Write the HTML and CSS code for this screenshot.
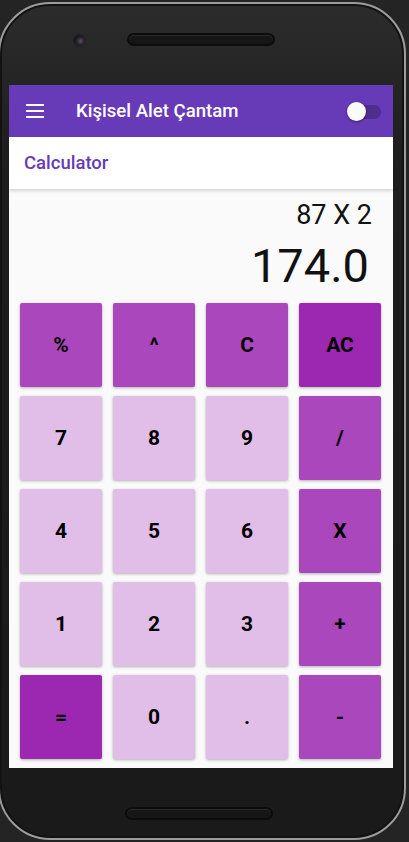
FILE: index.html
```html
<!DOCTYPE html>
<html lang="tr">
<head>
<meta charset="utf-8">
<title>Kişisel Alet Çantam</title>
<link rel="stylesheet" href="styles.css">
</head>
<body>
<div class="phone">
  <div class="bezel-top">
    <span class="camera"></span>
    <span class="speaker"></span>
  </div>
  <div class="screen">
    <header class="appbar">
      <svg class="menu" width="18" height="14" viewBox="0 0 18 14"><rect x="0" y="0" width="18" height="2" fill="#fff"/><rect x="0" y="6" width="18" height="2" fill="#fff"/><rect x="0" y="12" width="18" height="2" fill="#fff"/></svg>
      <h1 class="title">Kişisel Alet Çantam</h1>
      <div class="switch"><span class="track"></span><span class="thumb"></span></div>
    </header>
    <nav class="tabbar"><span class="tab">Calculator</span></nav>
    <section class="display">
      <div class="expr">87 X 2</div>
      <div class="result">174.0</div>
    </section>
    <section class="keys">
      <button class="key op">%</button>
      <button class="key op">^</button>
      <button class="key op">C</button>
      <button class="key strong">AC</button>
      <button class="key num">7</button>
      <button class="key num">8</button>
      <button class="key num">9</button>
      <button class="key op">/</button>
      <button class="key num">4</button>
      <button class="key num">5</button>
      <button class="key num">6</button>
      <button class="key op">X</button>
      <button class="key num">1</button>
      <button class="key num">2</button>
      <button class="key num">3</button>
      <button class="key op">+</button>
      <button class="key strong">=</button>
      <button class="key num">0</button>
      <button class="key num">.</button>
      <button class="key op">-</button>
    </section>
  </div>
  <div class="bezel-bottom">
    <span class="speaker"></span>
  </div>
</div>
</body>
</html>
```
FILE: styles.css
```css
* { box-sizing: border-box; }
html, body {
  margin: 0;
  padding: 0;
  background: #242424;
  overflow: hidden;
  font-family: Roboto, "Noto Sans", sans-serif;
}
.phone {
  width: 408px;
  height: 838px;
  margin: 2px 0 0 -2px;
  border: 2px solid #9c9c9c;
  border-radius: 52px;
  background: linear-gradient(#2c2c2c, #1d1d1d 20%, #1a1a1a);
  box-shadow: inset 0 0 0 2px #121212;
  padding: 0 11px 0 9px;
  display: flex;
  flex-direction: column;
}
.bezel-top {
  height: 81px;
  display: flex;
  align-items: flex-start;
  padding-left: 65px;
}
.camera {
  width: 11px;
  height: 11px;
  margin-top: 31px;
  border-radius: 50%;
  background: radial-gradient(circle at 60% 55%, #6a4a6a 0, #2a2a30 35%, #151518 70%);
  box-shadow: 0 0 0 1px #222;
}
.speaker {
  width: 148px;
  height: 13px;
  border-radius: 7px;
  background: #161616;
  border: 2px solid #0c0c0c;
  box-shadow: inset 0 1px 1px #2c2c2c;
}
.bezel-top .speaker { margin: 29px 0 0 42px; }
.bezel-bottom {
  flex: 1;
  display: flex;
  justify-content: flex-start;
  padding-left: 116px;
}
.bezel-bottom .speaker { margin-top: 39px; }
.screen {
  width: 384px;
  height: 683px;
  background: #fafafa;
  display: flex;
  flex-direction: column;
}
.appbar {
  height: 52px;
  background: #673ab7;
  display: flex;
  align-items: center;
  padding: 0 12px 0 17px;
}
.menu { display: block; }
.title {
  margin: 0 0 0 32px;
  flex: 1;
  color: #fff;
  font-size: 18.6px;
  font-weight: 500;
}
.switch {
  position: relative;
  width: 34px;
  height: 19px;
}
.track {
  position: absolute;
  left: 3px;
  top: 3px;
  width: 31px;
  height: 14px;
  border-radius: 7px;
  background: #4f2d8f;
}
.thumb {
  position: absolute;
  left: 0;
  top: 0;
  width: 19px;
  height: 19px;
  border-radius: 50%;
  background: #fafafa;
  box-shadow: 0 1px 3px rgba(0,0,0,0.4);
}
.tabbar {
  height: 52px;
  background: #fff;
  display: flex;
  align-items: center;
  padding-left: 15px;
  box-shadow: 0 2px 3px rgba(0,0,0,0.15);
  position: relative;
  z-index: 1;
}
.tab {
  color: #673ab7;
  font-size: 18.5px;
  font-weight: 500;
}
.display {
  padding: 10px 21px 10px 0;
  text-align: right;
  color: #111;
}
.expr {
  font-size: 27px;
  line-height: 32px;
  height: 32px;
  margin-bottom: 8px;
}
.result {
  font-size: 47px;
  line-height: 54px;
  height: 54px;
  padding-right: 3px;
}
.keys {
  display: grid;
  grid-template-columns: repeat(4, 82px);
  grid-auto-rows: 84px;
  gap: 9px 11px;
  padding: 0 12px 9px 11px;
}
.key {
  border: 0;
  margin: 0;
  border-radius: 2px;
  font-family: Roboto, "Noto Sans", sans-serif;
  font-size: 21px;
  font-weight: 700;
  color: #000;
  box-shadow: 0 1px 3px rgba(0,0,0,0.3);
}
.num { background: #e1bee7; }
.op { background: #ab47bc; }
.strong { background: #9c27b0; }
```
